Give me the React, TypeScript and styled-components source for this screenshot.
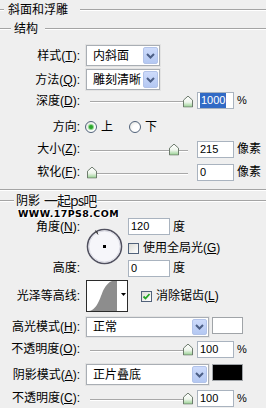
import React from "react";
import styled, { createGlobalStyle } from "styled-components";

const GlobalStyle = createGlobalStyle`
  html, body {
    margin: 0;
    padding: 0;
    background: #efefef;
  }
  body {
    font-family: "Liberation Sans", "Noto Sans CJK SC", sans-serif;
    font-size: 12px;
    color: #000;
  }
`;

const etched = `
  border-top: 1px solid #a4a4a4;
  border-bottom: 1px solid #ffffff;
`;

const Panel = styled.div`
  width: 266px;
  height: 408px;
  overflow: hidden;
  display: flex;
  flex-direction: column;
  background: #efefef;
`;

const GroupTitle = styled.div<{ $lead: number; $padL: number; $padR: number; $h: number }>`
  position: relative;
  display: flex;
  align-items: center;
  height: ${(p) => p.$h}px;
  flex-shrink: 0;
  &::before {
    content: "";
    width: ${(p) => p.$lead}px;
    ${etched}
  }
  &::after {
    content: "";
    flex: 1;
    ${etched}
  }
  & > span {
    padding: 0 ${(p) => p.$padR}px 0 ${(p) => p.$padL}px;
    line-height: 1;
  }
`;

const Separator = styled.div<{ $mt: number }>`
  margin-top: ${(p) => p.$mt}px;
  height: 0;
  flex-shrink: 0;
  ${etched}
`;

const Row = styled.div<{ $h: number; $mt: number; $cols: string }>`
  display: grid;
  grid-template-columns: ${(p) => p.$cols};
  align-items: center;
  height: ${(p) => p.$h}px;
  margin-top: ${(p) => p.$mt}px;
  flex-shrink: 0;
`;

const Label = styled.div`
  text-align: right;
  padding-right: 6px;
  white-space: nowrap;
  line-height: 1;
  u {
    text-underline-offset: 1px;
  }
`;

const SelectBox = styled.div<{ $w: number; $h: number }>`
  box-sizing: border-box;
  width: ${(p) => p.$w}px;
  height: ${(p) => p.$h}px;
  display: flex;
  align-items: center;
  background: #fff;
  border: 1px solid #a9aeb4;
  box-shadow: 0 0 0 1px #e3e3e3;
  padding-left: 6px;
  line-height: 1;
  white-space: nowrap;
`;

const ArrowButton = styled.div`
  box-sizing: border-box;
  margin-left: auto;
  margin-right: 1px;
  width: 15px;
  height: calc(100% - 2px);
  display: flex;
  align-items: center;
  justify-content: center;
  background: linear-gradient(#cddbfb, #b4c8f2);
  border: 1px solid #b2c3e9;
  border-radius: 2px;
`;

const SliderArea = styled.div`
  position: relative;
  height: 100%;
  display: flex;
  align-items: center;
`;

const Track = styled.div`
  margin-left: 4px;
  margin-top: 3px;
  width: 98px;
  height: 0;
  border-top: 1px solid #a8a8a8;
  border-bottom: 1px solid #ffffff;
`;

const Thumb = styled.div`
  position: absolute;
  top: 50%;
  transform: translateY(-45%);
  width: 10px;
  height: 12px;
  display: flex;
`;

const NumBox = styled.div<{ $w: number }>`
  box-sizing: border-box;
  width: ${(p) => p.$w}px;
  height: 17px;
  background: #fff;
  border: 1px solid #a9b3bf;
  display: flex;
  align-items: center;
  padding-left: 2px;
  font-family: "Liberation Sans", Arial, sans-serif;
  font-size: 11px;
  line-height: 1;
`;

const Selected = styled.span`
  background: #316ac5;
  color: #fff;
  padding: 2px 1px;
`;

const Unit = styled.div<{ $latin?: boolean }>`
  line-height: 1;
  white-space: nowrap;
  font-size: ${(p) => (p.$latin ? 11 : 12)}px;
`;

const RadioGroup = styled.div`
  display: flex;
  align-items: center;
`;

const RadioOption = styled.div<{ $w: number }>`
  display: flex;
  align-items: center;
  gap: 4px;
  width: ${(p) => p.$w}px;
  line-height: 1;
`;

const RadioDot = styled.span<{ $on: boolean }>`
  box-sizing: border-box;
  width: 12px;
  height: 12px;
  margin-left: -1px;
  border-radius: 50%;
  border: 1px solid #51627a;
  background: radial-gradient(circle at 65% 65%, #ffffff 40%, #dcdcd6);
  display: flex;
  align-items: center;
  justify-content: center;
  &::after {
    content: "";
    width: 4px;
    height: 4px;
    border-radius: 50%;
    background: ${(p) => (p.$on ? "#2aa52a" : "transparent")};
    box-shadow: ${(p) => (p.$on ? "0 0 1px 1px #7fd07f" : "none")};
  }
`;

const CheckRow = styled.div`
  display: flex;
  align-items: center;
  gap: 4px;
  line-height: 1;
  white-space: nowrap;
`;

const CheckBox = styled.span`
  box-sizing: border-box;
  width: 11px;
  height: 11px;
  border: 1px solid #51627a;
  background: linear-gradient(135deg, #dcdcd6, #ffffff);
  display: flex;
  align-items: center;
  justify-content: center;
`;

const AngleGrid = styled.div`
  display: grid;
  grid-template-columns: 86px 42px auto;
  grid-template-rows: 21px 22px 18px;
  align-items: center;
  margin-top: 5px;
  flex-shrink: 0;
`;

const Dial = styled.div`
  grid-column: 2;
  grid-row: 1 / span 3;
  width: 37px;
  height: 37px;
  display: flex;
`;

const InputWithUnit = styled.div`
  display: flex;
  align-items: center;
  gap: 3px;
`;

const ContourBox = styled.div`
  width: 42px;
  height: 32px;
  display: flex;
`;

const Swatch = styled.div<{ $color: string }>`
  box-sizing: border-box;
  width: 31px;
  height: 17px;
  align-self: start;
  background: ${(p) => p.$color};
  border: 1px solid #a0a4a8;
`;

const WatermarkTitle = styled.div`
  position: absolute;
  left: 44px;
  top: 2px;
  font-family: "Noto Sans CJK SC", sans-serif;
  font-size: 14px;
  letter-spacing: -1px;
  line-height: 1;
  color: #111;
  text-shadow: 0 0 2px #fff, 0 0 2px #fff, 0 0 1px #fff;
  white-space: nowrap;
  z-index: 2;
`;

const WatermarkUrl = styled.div`
  position: absolute;
  left: 18px;
  top: 19px;
  font-family: "DejaVu Sans", sans-serif;
  font-weight: 900;
  font-size: 9px;
  letter-spacing: 0.4px;
  line-height: 1;
  color: #000;
  text-shadow: 0 0 1px #fff, 1px 1px 0 #fff, -1px -1px 0 #fff;
  white-space: nowrap;
  z-index: 2;
  transform: scaleX(1.05);
  transform-origin: left center;
`;

const Chevron = () => (
  <svg width="9" height="6" viewBox="0 0 9 6">
    <path d="M1 1 L4.5 4.5 L8 1" fill="none" stroke="#4c5f86" strokeWidth="2" />
  </svg>
);

const Select = ({ w, h, text }: { w: number; h: number; text: string }) => (
  <SelectBox $w={w} $h={h}>
    {text}
    <ArrowButton>
      <Chevron />
    </ArrowButton>
  </SelectBox>
);

const Slider = ({ value }: { value: number }) => (
  <SliderArea>
    <Track />
    <Thumb style={{ left: 4 + 98 * value - 5 }}>
      <svg width="10" height="12" viewBox="0 0 10 12">
        <defs>
          <linearGradient id="thumbFill" x1="0" y1="0" x2="0" y2="1">
            <stop offset="0" stopColor="#ffffff" />
            <stop offset="0.55" stopColor="#eef5ec" />
            <stop offset="1" stopColor="#93cf8d" />
          </linearGradient>
        </defs>
        <path d="M0.5 4.5 L5 0.5 L9.5 4.5 V11.5 H0.5 Z" fill="url(#thumbFill)" stroke="#6d7b6d" />
      </svg>
    </Thumb>
  </SliderArea>
);

const SLIDER_COLS = "86px 111px 40px auto";

const SliderRow = ({
  label,
  value,
  num,
  unit,
  h,
  mt,
  selected,
}: {
  label: React.ReactNode;
  value: number;
  num: string;
  unit: string;
  h: number;
  mt: number;
  selected?: boolean;
}) => (
  <Row $h={h} $mt={mt} $cols={SLIDER_COLS}>
    <Label>{label}</Label>
    <Slider value={value} />
    <NumBox $w={37}>{selected ? <Selected>{num}</Selected> : num}</NumBox>
    <Unit $latin={unit === "%"}>{unit}</Unit>
  </Row>
);

const CheckMark = () => (
  <svg width="9" height="9" viewBox="0 0 9 9">
    <path d="M1.5 4.5 L3.5 6.5 L7.5 2" fill="none" stroke="#24a524" strokeWidth="1.8" />
  </svg>
);

const App = () => {
  return (
    <Panel>
      <GlobalStyle />
      <GroupTitle $lead={4} $padL={4} $padR={12} $h={20}>
        <span>斜面和浮雕</span>
      </GroupTitle>
      <GroupTitle $lead={11} $padL={3} $padR={7} $h={18}>
        <span>结构</span>
      </GroupTitle>

      <Row $h={21} $mt={7} $cols="86px auto">
        <Label>样式(<u>T</u>):</Label>
        <Select w={74} h={21} text="内斜面" />
      </Row>
      <Row $h={21} $mt={3} $cols="86px auto">
        <Label>方法(<u>Q</u>):</Label>
        <Select w={74} h={21} text="雕刻清晰" />
      </Row>

      <SliderRow label={<>深度(<u>D</u>):</>} value={1} num="1000" unit="%" h={19} mt={1} selected />

      <Row $h={20} $mt={7} $cols="86px auto">
        <Label>方向:</Label>
        <RadioGroup>
          <RadioOption $w={44}>
            <RadioDot $on />上
          </RadioOption>
          <RadioOption $w={30}>
            <RadioDot $on={false} />下
          </RadioOption>
        </RadioGroup>
      </Row>

      <SliderRow label={<>大小(<u>Z</u>):</>} value={0.86} num="215" unit="像素" h={18} mt={3} />
      <SliderRow label={<>软化(<u>F</u>):</>} value={0.02} num="0" unit="像素" h={18} mt={5} />

      <Separator $mt={8} />

      <GroupTitle $lead={14} $padL={2} $padR={4} $h={20}>
        <span>阴影</span>
        <WatermarkTitle>一起ps吧</WatermarkTitle>
        <WatermarkUrl>WWW.17PS8.COM</WatermarkUrl>
      </GroupTitle>

      <AngleGrid>
        <Label style={{ gridColumn: 1, gridRow: 1 }}>角度(<u>N</u>):</Label>
        <Dial>
          <svg width="37" height="37" viewBox="0 0 37 37">
            <circle cx="18.5" cy="18.5" r="17" fill="#f6f6fa" stroke="#50505f" strokeWidth="1.6" />
            <circle cx="18.5" cy="18.5" r="15.6" fill="none" stroke="#d8d8e2" strokeWidth="1" />
            <rect x="17" y="17" width="3" height="3" fill="#000" />
            <line x1="9.5" y1="2.5" x2="12" y2="6.5" stroke="#333" strokeWidth="1" />
            <line x1="8.5" y1="4.5" x2="12" y2="4.5" stroke="#555" strokeWidth="0.8" />
          </svg>
        </Dial>
        <InputWithUnit style={{ gridColumn: 3, gridRow: 1 }}>
          <NumBox $w={42}>120</NumBox>
          <Unit>度</Unit>
        </InputWithUnit>
        <CheckRow style={{ gridColumn: 3, gridRow: 2 }}>
          <CheckBox />
          <span>
            使用全局光(<u>G</u>)
          </span>
        </CheckRow>
        <Label style={{ gridColumn: 1, gridRow: 3 }}>高度:</Label>
        <InputWithUnit style={{ gridColumn: 3, gridRow: 3 }}>
          <NumBox $w={42}>0</NumBox>
          <Unit>度</Unit>
        </InputWithUnit>
      </AngleGrid>

      <Row $h={32} $mt={3} $cols="86px 55px auto">
        <Label>光泽等高线:</Label>
        <ContourBox>
          <svg width="42" height="32" viewBox="0 0 42 32">
            <rect x="0.5" y="0.5" width="41" height="31" fill="#fff" stroke="#2b2b2b" />
            <path d="M3 31 C 12 30, 15 14, 18 9 C 20 5, 23 2, 26 1 L 31 1 L 31 31 Z" fill="#8d8d8d" />
            <path d="M35 13 H40 L37.5 16 Z" fill="#000" />
          </svg>
        </ContourBox>
        <CheckRow>
          <CheckBox>
            <CheckMark />
          </CheckBox>
          <span>
            消除锯齿(<u>L</u>)
          </span>
        </CheckRow>
      </Row>

      <Row $h={20} $mt={5} $cols="86px 126px auto">
        <Label>高光模式(<u>H</u>):</Label>
        <Select w={123} h={20} text="正常" />
        <Swatch $color="#ffffff" />
      </Row>
      <SliderRow label={<>不透明度(<u>O</u>):</>} value={1} num="100" unit="%" h={18} mt={3} />
      <Row $h={21} $mt={6} $cols="86px 126px auto">
        <Label>阴影模式(<u>A</u>):</Label>
        <Select w={123} h={21} text="正片叠底" />
        <Swatch $color="#000000" />
      </Row>
      <SliderRow label={<>不透明度(<u>C</u>):</>} value={1} num="100" unit="%" h={18} mt={4} />
    </Panel>
  );
};

export default App;
